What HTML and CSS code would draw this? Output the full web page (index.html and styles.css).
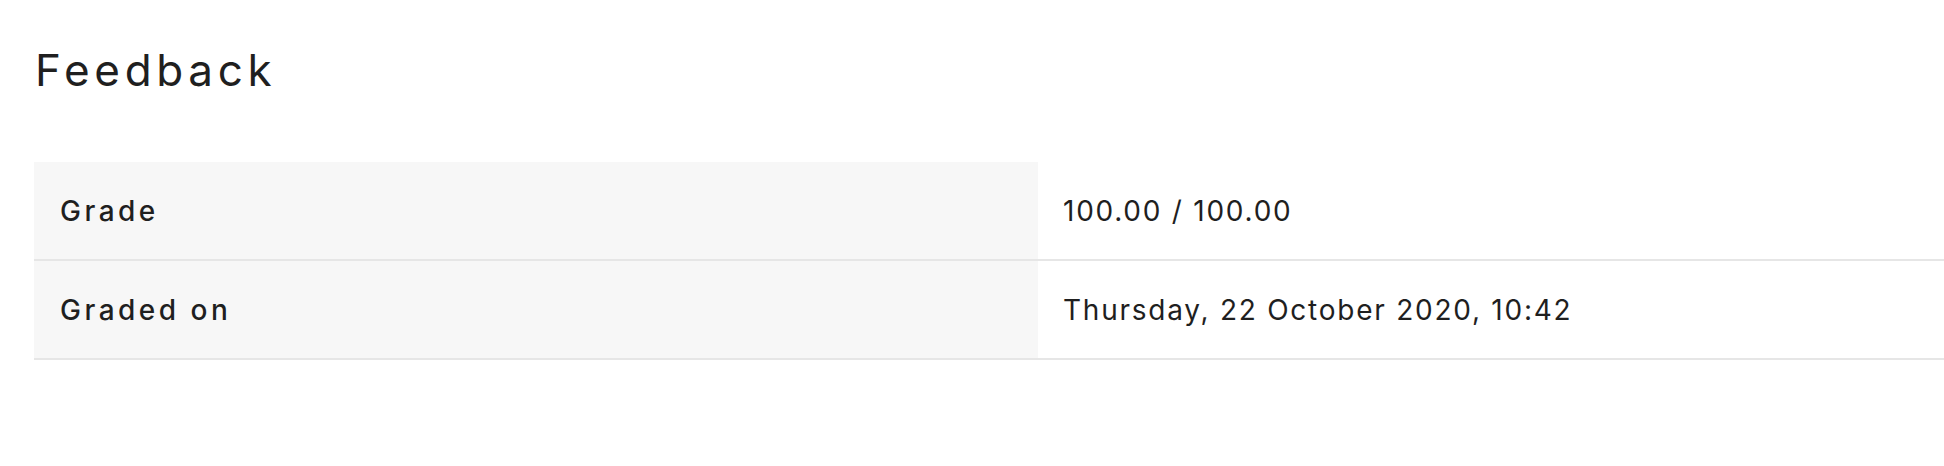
FILE: index.html
```html
<!DOCTYPE html>
<html>
<head>
<meta charset="utf-8">
<link rel="stylesheet" href="styles.css">
</head>
<body>
<div class="page">
  <h2 class="title">Feedback</h2>
  <div class="feedback-table">
    <div class="cell label">Grade</div>
    <div class="cell value">100.00 / 100.00</div>
    <div class="cell label">Graded on</div>
    <div class="cell value">Thursday, 22 October 2020, 10:42</div>
  </div>
</div>
</body>
</html>
```
FILE: styles.css
```css
html, body {
  margin: 0;
  padding: 0;
  background: #ffffff;
}
body {
  font-family: Inter, "Open Sans", "Liberation Sans", sans-serif;
  color: #1f1f1f;
}
.page {
  padding: 40px 0 0 34px;
}
.title {
  margin: 0 0 0 1px;
  font-size: 44px;
  font-weight: 400;
  line-height: 60px;
  letter-spacing: 4.7px;
}
.feedback-table {
  margin-top: 62px;
  display: grid;
  grid-template-columns: 1004px 1fr;
}
.cell {
  height: 97px;
  display: flex;
  align-items: center;
  border-bottom: 2px solid #e6e6e6;
  font-size: 28px;
  box-sizing: content-box;
}
.label {
  background: #f7f7f7;
  font-weight: 500;
  padding-left: 26px;
  letter-spacing: 3.5px;
}
.value {
  font-weight: 400;
  padding-left: 25px;
  letter-spacing: 1.75px;
}
```
